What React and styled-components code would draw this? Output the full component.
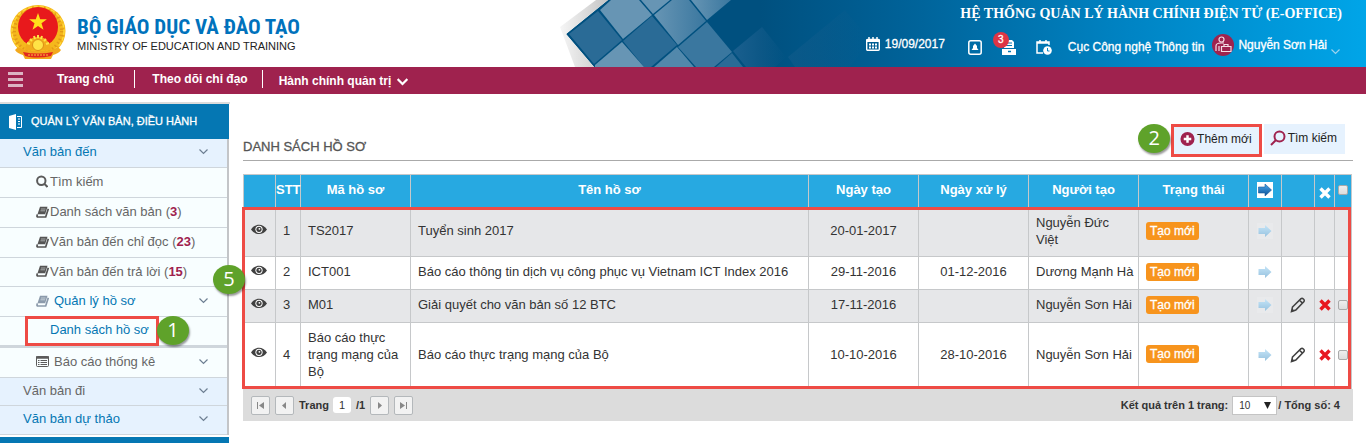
import React from 'react';
import styled, { createGlobalStyle } from 'styled-components';

const Global = createGlobalStyle`
  *, *::before, *::after { box-sizing: border-box; }
  body { margin: 0; background: #fff; color: #333; font: 13px/17px "Liberation Sans", Arial, sans-serif; overflow-x: hidden; }
  button, input, select { font-family: inherit; margin: 0; }
  a { color: inherit; text-decoration: none; }
  svg { display: block; flex: none; }
`;

/* ---------- header ---------- */
const Header = styled.header`
  position: relative;
  display: flex;
  justify-content: space-between;
  height: 67px;
  background: linear-gradient(90deg, #00507f 760px, #006197 900px, #0084c4 1130px, #00a5e8 100%);
`;
const HeaderArt = styled.svg`
  position: absolute;
  left: 0;
  top: 0;
`;
const Brand = styled.div`
  position: relative;
  display: flex;
  gap: 8px;
  padding: 4px 0 0 8px;
`;
const BrandText = styled.div`
  padding-top: 12px;
`;
const BrandName = styled.div`
  color: #0072bc;
  font: bold 21px/22px "Roboto Condensed", "Roboto", sans-serif;
  white-space: nowrap;
`;
const BrandSub = styled.div`
  color: #222;
  font-size: 11px;
  line-height: 17px;
  white-space: nowrap;
`;
const HeaderRight = styled.div`
  position: relative;
  color: #fff;
  padding-right: 24px;
`;
const SystemName = styled.h1`
  margin: 0;
  padding-top: 4px;
  text-align: right;
  font: bold 14px/20px "Liberation Serif", serif;
`;
const Tools = styled.div`
  display: flex;
  align-items: center;
  height: 46px;
  font-size: 12px;
  white-space: nowrap;
  -webkit-text-stroke: 0.3px #fff;
  margin-right: 2px;
`;
const DateBox = styled.div`
  display: flex;
  align-items: center;
  gap: 5px;
  margin-right: 23px;
  padding-bottom: 6px;
`;
const IconButton = styled.button`
  position: relative;
  padding: 0;
  border: 0;
  background: none;
  color: #fff;
  margin-right: ${(p) => p.$gap}px;
`;
const Badge = styled.span`
  position: absolute;
  left: -9px;
  top: -8px;
  width: 16px;
  height: 16px;
  border-radius: 50%;
  background: #dc3545;
  font-size: 10px;
  line-height: 16px;
  text-align: center;
`;
const User = styled.button`
  display: flex;
  align-items: center;
  gap: 4px;
  margin-left: 8px;
  padding: 0 0 4px;
  border: 0;
  background: none;
  color: #fff;
  font-size: 12px;
  > svg:last-child { align-self: flex-end; }
`;

/* ---------- navigation ---------- */
const Nav = styled.nav`
  display: flex;
  align-items: center;
  height: 27px;
  padding: 0 8px 3px;
  background: #9f224e;
  color: #fff;
`;
const MenuButton = styled.button`
  display: flex;
  flex-direction: column;
  gap: 3px;
  width: 15px;
  margin-right: 15px;
  padding: 0;
  border: 0;
  background: none;
`;
const MenuBar = styled.span`
  height: 3px;
  background: #dcb4c3;
`;
const NavLink = styled.a`
  display: flex;
  align-items: center;
  gap: 6px;
  height: 18px;
  padding: ${(p) => (p.$low ? '4px 16px 0 16px' : p.$line ? '0 14px 0 17px' : '0 20px 0 19px')};
  border-left: ${(p) => (p.$line ? '1px solid #fff' : '0')};
  font-size: 12px;
  font-weight: bold;
`;

/* ---------- sidebar ---------- */
const Body = styled.div`
  display: flex;
  align-items: flex-start;
  padding-top: 8px;
`;
const Side = styled.aside`
  flex: none;
  width: 230px;
  border-top: 2px solid #dcdcdc;
`;
const SideTitle = styled.h2`
  display: flex;
  align-items: center;
  gap: 9px;
  height: 35px;
  margin: 0 1px 0 0;
  padding-left: 9px;
  background: #0577b3;
  color: #fff;
  font-size: 11px;
  font-weight: normal;
  -webkit-text-stroke: 0.3px #fff;
`;
const SideList = styled.div`
  position: relative;
  border-right: 2px solid #c3c5c8;
  margin-right: 1px;
`;
const SideLink = styled.a`
  display: flex;
  align-items: center;
  height: ${(p) => p.$h || 30}px;
  padding: 0 19px ${(p) => (p.$leaf ? 2 : 4)}px ${(p) => p.$indent}px;
  gap: ${(p) => p.$gap || 2}px;
  border-bottom: ${(p) => (p.$thick ? 3 : 1)}px solid #cfd6dc;
  background: ${(p) => (p.$top ? '#e6f2fe' : '#f8feff')};
  color: ${(p) => (p.$active ? '#0577b3' : '#666')};
  white-space: nowrap;
  > svg:last-child { margin-left: ${(p) => (p.$open ? 'auto' : '0')}; }
`;
const Count = styled.b`
  color: #9f224e;
`;
const NextTitle = styled.div`
  height: 7px;
  margin: 2px 1px 0 0;
  background: #0577b3;
`;

/* ---------- main ---------- */
const Main = styled.main`
  flex: 1;
  min-width: 0;
  padding: 22px 13px 0;
`;
const TitleBar = styled.div`
  display: flex;
  justify-content: space-between;
  height: 37px;
  border-bottom: 1px solid #aaa;
  margin-bottom: 13px;
`;
const Title = styled.h2`
  margin: 14px 0 0;
  font-size: 13px;
  font-weight: normal;
  line-height: 18px;
  color: #555;
  -webkit-text-stroke: 0.3px #555;
`;
const Actions = styled.div`
  display: flex;
  align-items: flex-start;
  gap: 2px;
  padding-right: 8px;
`;
const Action = styled.button`
  display: flex;
  align-items: center;
  gap: 2px;
  height: ${(p) => (p.$marked ? 33 : 30)}px;
  padding: ${(p) => (p.$marked ? '0 7px 4px 6px' : '0 8px 2px 6px')};
  border: ${(p) => (p.$marked ? '3px solid #ee4b45' : '0')};
  background: #e6f2fe;
  color: #222;
  font-size: 12px;
  white-space: nowrap;
`;
const Marked = styled.div`
  position: relative;
`;
const RedFrame = styled.div`
  position: absolute;
  pointer-events: none;
  border: 3px solid #ee4b45;
  top: ${(p) => p.$t}px;
  left: ${(p) => p.$l}px;
  right: ${(p) => p.$r}px;
  bottom: ${(p) => p.$b}px;
`;
const Step = styled.span`
  position: absolute;
  z-index: 2;
  left: ${(p) => p.$l}px;
  top: ${(p) => p.$t}px;
  width: 32px;
  height: 29px;
  border-radius: 50%;
  background: #5fa22a;
  box-shadow: 1px 2px 2px rgba(0, 0, 0, 0.4);
  color: #fff;
  font: 20px/28px "Open Sans", sans-serif;
  text-align: center;
`;
const Table = styled.table`
  width: calc(100% - 1px);
  border-collapse: collapse;
  table-layout: fixed;
`;
const Th = styled.th`
  height: 33px;
  padding: ${(p) => (p.$icon ? '4px 0 0' : '0 0 3px')};
  border: 1px solid #c6c8ca;
  background: #27a9e1;
  color: #fff;
  font-weight: bold;
  > svg { margin: 0 auto; }
`;
const Tr = styled.tr`
  height: ${(p) => p.$h}px;
  background: ${(p) => (p.$odd ? '#e6e7e9' : '#fff')};
`;
const Td = styled.td`
  padding: ${(p) => (p.$icon ? '0 0 2px' : '0 0 3px 7px')};
  border: 1px solid #c6c8ca;
  text-align: left;
  white-space: pre-line;
`;
const DateTd = styled(Td)`
  padding: 0 0 3px;
  text-align: center;
`;
const RowButton = styled.button`
  display: block;
  margin: 0 auto;
  padding: ${(p) => (p.$up ? '0 2px 4px 0' : '0')};
  border: 0;
  background: none;
`;
const Check = styled.input`
  appearance: none;
  display: block;
  width: 10px;
  height: 10px;
  margin: 0 0 0 3px;
  border: 1px solid #aaa;
  border-radius: 2px;
  background: linear-gradient(#eee, #ddd);
`;
const Tag = styled.span`
  display: inline-block;
  padding: 0 4px;
  border-radius: 3px;
  background: #f7941d;
  color: #fff;
  font-size: 12px;
  line-height: 18px;
  -webkit-text-stroke: 0.3px #fff;
`;
const Pager = styled.footer`
  display: flex;
  align-items: center;
  height: 32px;
  padding: 0 13px 0 8px;
  background: #dcdcdc;
  font-size: 11px;
  font-weight: bold;
  white-space: nowrap;
`;
const PageButton = styled.button`
  display: grid;
  place-items: center;
  width: 19px;
  height: 19px;
  margin-right: 5px;
  padding: 0;
  border: 1px solid #b4b8bb;
  border-radius: 2px;
  background: #f2f2f2;
`;
const PageInput = styled.input`
  width: 18px;
  height: 16px;
  margin: 0 5px 0 4px;
  padding: 0;
  border: 0;
  border-radius: 3px;
  background: #fff;
  color: #333;
  font-size: 11px;
  text-align: center;
`;
const PageTotal = styled.span`
  margin-right: 5px;
`;
const Total = styled.label`
  display: flex;
  align-items: center;
  margin-left: auto;
`;
const SizeWrap = styled.span`
  position: relative;
  display: flex;
  align-items: center;
  margin: 0 1px 0 4px;
`;
const SizeSelect = styled.select`
  appearance: none;
  width: 45px;
  height: 19px;
  padding: 0 6px;
  border: 1px solid #c4c4c4;
  border-radius: 0;
  background: #fff;
  color: #333;
  font-size: 10px;
`;
const SelectArrow = styled.svg`
  position: absolute;
  right: 6px;
  pointer-events: none;
`;

/* ---------- drawings ---------- */
const Emblem = () => (
  <svg width="61" height="57" viewBox="0 0 61 57" aria-hidden="true">
    <ellipse cx="30" cy="27" rx="27.500" ry="26" fill="#f5b81c" />
    <ellipse cx="30" cy="27" rx="24" ry="23" fill="none" stroke="#e39a17" strokeWidth="4" strokeDasharray="1.500 2.500" />
    <ellipse cx="30" cy="27" rx="26" ry="24.500" fill="none" stroke="#ffd83a" strokeWidth="1.500" strokeDasharray="4 2" />
    <ellipse cx="30" cy="23" rx="20" ry="20" fill="#e8191c" />
    <path d="M30 9l2.200 6.300h6.700l-5.400 4 2 6.500-5.500-3.900-5.500 3.900 2-6.500-5.400-4h6.700z" fill="#ffe01b" />
    <path d="M17 46c1-9 6-13 13-13s12 4 13 13z" fill="#f2ac1c" />
    <path d="M22 35l2 2M38 35l-2 2M30 31v3M26 32l1 3M34 32l-1 3M19 39l3 1M41 39l-3 1" stroke="#ffe346" strokeWidth="2" />
    <circle cx="30" cy="41" r="5.500" fill="#ffe346" stroke="#dc8f17" />
    <path d="M10 43c6 4 12 4 20 4s14 0 20-4l3 3c-2 3-5 4-8 5l-2 4H17l-2-4c-3-1-6-2-8-5z" fill="#f2a91d" />
    <path d="M15 48c10 2 20 2 30 0l-2 4c-9 2-18 2-26 0z" fill="#e2261f" />
    <path d="M20 51h20" stroke="#f8c63a" strokeDasharray="2 1" />
  </svg>
);
const Calendar = () => (
  <svg width="14" height="14" viewBox="0 0 14 14" aria-hidden="true">
    <path d="M0 2.500h14V5H0z" fill="#fff" />
    <path d="M3 0v3M7 0v3M11 0v3" stroke="#fff" strokeWidth="1.500" />
    <rect x=".7" y="2.500" width="12.600" height="10.800" rx="1" fill="none" stroke="#fff" strokeWidth="1.400" />
    <path d="M3 7.500h2M6 7.500h2M9 7.500h2M3 10.500h2M6 10.500h2M9 10.500h2" stroke="#fff" strokeWidth="2" />
  </svg>
);
const Chevron = ({ color = '#6d7f92', w = 9, s = 1.2 }) => (
  <svg width={w} height={w} viewBox="0 0 9 9" fill="none" stroke={color} strokeWidth={s} aria-hidden="true"><path d="M.5 2.500l4 4 4-4" /></svg>
);
const Book = ({ color = '#555' }) => (
  <svg width="13" height="12" viewBox="0 0 13 12" aria-hidden="true">
    <path d="M4 .8H11.500L9.200 8.300H1.500z" fill={color} />
    <path d="M1.500 8.300C.5 10.300 1 11 2.200 11H9.700L12.300 2.800" fill="none" stroke={color} strokeWidth="1.700" />
    <path d="M5 3H9.500M4.500 4.800H9" stroke="#f8feff" strokeWidth=".5" />
  </svg>
);
const Lens = () => (
  <svg width="12" height="13" viewBox="0 0 12 13" fill="none" stroke="#5b5b5b" strokeWidth="2" aria-hidden="true"><circle cx="5.300" cy="5.800" r="4.200" /><path d="M8.300 8.800l3.200 3.200" /></svg>
);
const ListIcon = () => (
  <svg width="13" height="11" viewBox="0 0 13 11" aria-hidden="true">
    <rect x=".5" y=".5" width="12" height="10" rx="1" fill="none" stroke="#5b5b5b" /><path d="M0 1.500h13" stroke="#5b5b5b" strokeWidth="2.500" />
    <path d="M2 4.500h1.500M4.500 4.500H11M2 6.500h1.500M4.500 6.500H11M2 8.500h1.500M4.500 8.500H11" stroke="#5b5b5b" />
  </svg>
);
const Eye = () => (
  <svg width="16" height="11" viewBox="0 0 16 11" aria-hidden="true">
    <path d="M0 5.500C4-.8 12-.8 16 5.500 12 11.500 4 11.500 0 5.500z" fill="#404040" />
    <circle cx="8" cy="5.300" r="3.600" fill="#fff" /><circle cx="8" cy="5.300" r="2.600" fill="#404040" /><circle cx="8.400" cy="4.800" r=".9" fill="#fff" />
  </svg>
);
const Arrow = ({ strong }) => (
  <svg width="16" height="16" viewBox="0 0 16 16" aria-hidden="true">
    <defs><linearGradient id={strong ? 'arrowStrong' : 'arrowSoft'} x1="0" y1="0" x2="0" y2="1"><stop offset="0" stopColor={strong ? '#4aaaf0' : '#c5e5f8'} /><stop offset="1" stopColor={strong ? '#0b4f94' : '#97c2df'} /></linearGradient></defs>
    <rect width="16" height="16" fill="#fff" opacity={strong ? 1 : 0.15} />
    <path d="M1.500 5H8V2L14.500 8 8 14V11H1.500z" fill={`url(#${strong ? 'arrowStrong' : 'arrowSoft'})`} stroke={strong ? '#1b5a9c' : 'none'} strokeWidth=".6" />
  </svg>
);
const Cross = ({ color }) => (
  <svg width="12" height="12" viewBox="0 0 12 12" stroke={color} strokeWidth="3.400" aria-hidden="true"><path d="M1.500 1.500l9 9M10.500 1.500l-9 9" /></svg>
);
const Pencil = () => (
  <svg width="16" height="16" viewBox="0 0 16 16" fill="none" stroke="#404040" strokeWidth="1.500" aria-hidden="true">
    <path d="M2.500 10L11 1.700c1.500-1 4 1 3 2.800L5.800 13 1.500 14.500zM9.500 3.200l3 2.900" /><path d="M1 15l1.300-3.500 2.300 2.300z" fill="#404040" stroke="none" />
  </svg>
);
const PageGlyph = ({ d }) => (
  <svg width="9" height="9" viewBox="0 0 9 9" fill="#888" aria-hidden="true"><path d={d} /></svg>
);

const ROWS = [
  { h: 49, code: 'TS2017', name: 'Tuyển sinh 2017', created: '20-01-2017', done: '', by: 'Nguyễn Đức\nViệt' },
  { h: 33, code: 'ICT001', name: 'Báo cáo thông tin dịch vụ công phục vụ Vietnam ICT Index 2016', created: '29-11-2016', done: '01-12-2016', by: 'Dương Mạnh Hà' },
  { h: 33, code: 'M01', name: 'Giải quyết cho văn bản số 12 BTC', created: '17-11-2016', done: '', by: 'Nguyễn Sơn Hải', edit: true },
  { h: 66, code: 'Báo cáo thực trạng mạng của Bộ', name: 'Báo cáo thực trạng mạng của Bộ', created: '10-10-2016', done: '28-10-2016', by: 'Nguyễn Sơn Hải', edit: true },
];
const COLS = [32, 25, 110, null, 110, 110, 110, 110, 33, 33, 20, 17];

export default function App() {
  return (
    <>
      <Global />
      <Header>
        <HeaderArt width="900" height="67" viewBox="0 0 900 67" aria-hidden="true">
          <defs>
            <linearGradient id="edge" x1="0" x2="1"><stop offset="0" stopColor="#f6f6f6" /><stop offset="1" stopColor="#c4c4c4" /></linearGradient>
            <linearGradient id="tile" x1="0" x2="1"><stop offset="0" stopColor="#6795b4" /><stop offset="1" stopColor="#3a779f" /></linearGradient>
            <linearGradient id="haze" x1="0" x2="1"><stop offset="0" stopColor="#1a5f8e" /><stop offset="1" stopColor="#1a5f8e" stopOpacity="0" /></linearGradient>
          </defs>
          <path d="M0 0H608L566 34 594 67H0z" fill="#fff" />
          <path d="M596 0H608L566 34 594 67H575L560 27z" fill="url(#edge)" />
          <path d="M598 11L569 34 594 64 622 40z" fill="#2a6b96" />
          <path d="M600 10L611 0H639L652 15 623 39z" fill="#6795b4" />
          <path d="M641 0H670L653 14z" fill="#6795b4" />
          <path d="M623 41L652 16 677 45 651 67H644z" fill="#2a6b96" />
          <path d="M595 65L622 42 644 67H595z" fill="#6795b4" />
          <path d="M654 15L672 0H689L706 21 678 45z" fill="url(#tile)" />
          <path d="M691 0H731L707 20z" fill="url(#tile)" />
          <path d="M678 47L707 22 732 52 714 67H696z" fill="#3a779f" />
          <path d="M654 67L677 47 694 67z" fill="#5288ab" />
          <path d="M716 67L732 53 743 67z" fill="#2a6b96" />
          <path d="M733 51L762 27 786 57 775 67H746z" fill="url(#haze)" />
          <path d="M788 57L845 10 870 40 850 67H795z" fill="url(#haze)" opacity=".4" />
        </HeaderArt>
        <Brand>
          <Emblem />
          <BrandText>
            <BrandName>BỘ GIÁO DỤC VÀ ĐÀO TẠO</BrandName>
            <BrandSub>MINISTRY OF EDUCATION AND TRAINING</BrandSub>
          </BrandText>
        </Brand>
        <HeaderRight>
          <SystemName>HỆ THỐNG QUẢN LÝ HÀNH CHÍNH ĐIỆN TỬ (E-OFFICE)</SystemName>
          <Tools>
            <DateBox><Calendar />19/09/2017</DateBox>
            <IconButton $gap={20} aria-label="Thông báo">
              <svg width="14" height="15" viewBox="0 0 14 15" fill="none" stroke="#fff" strokeWidth="1.500"><rect x=".8" y=".8" width="12.400" height="13.400" rx="2" /><path d="M3.500 10h7L9 8V6L7 3.500 5 6v2zM6 11.500h2" fill="#fff" stroke="none" /></svg>
            </IconButton>
            <IconButton $gap={20} aria-label="Văn bản">
              <svg width="14" height="15" viewBox="0 0 14 15" fill="#fff"><path d="M4 0h6l2 2v6H2V4h2z" /><path d="M5 3h5M4 5.500h6" stroke="#0077b3" /><path d="M0 9h14v6H0z" /><path d="M6 11.500h3" stroke="#0077b3" strokeWidth="1.500" /></svg>
              <Badge>3</Badge>
            </IconButton>
            <IconButton $gap={16} aria-label="Lịch">
              <svg width="16" height="15" viewBox="0 0 16 15" fill="none" stroke="#fff" strokeWidth="1.500"><path d="M13 5V2H1v11h6M1 3h12M4 0v3M10 0v3" /><circle cx="11.500" cy="10.500" r="4.300" fill="#fff" stroke="none" /><path d="M11.500 8v3h2" stroke="#0086c6" strokeWidth="1" /></svg>
            </IconButton>
            <span>Cục Công nghệ Thông tin</span>
            <User>
              <svg width="22" height="22" viewBox="0 0 22 22" fill="none" stroke="#f2dbe4" strokeWidth="1.200"><circle cx="11" cy="11" r="11" fill="#9f224e" stroke="none" /><circle cx="9.500" cy="5.500" r="2.500" /><path d="M4 17v-5c0-2 2-3 5-3h3M7 17v-5M9.500 12.500h9.500v5H9.500zM12 12.500v-2h4v2" /></svg>
              Nguyễn Sơn Hải
              <Chevron color="#9cd3ee" />
            </User>
          </Tools>
        </HeaderRight>
      </Header>
      <Nav>
        <MenuButton aria-label="Menu"><MenuBar /><MenuBar /><MenuBar /></MenuButton>
        <NavLink href="#home">Trang chủ</NavLink>
        <NavLink href="#follow" $line>Theo dõi chỉ đạo</NavLink>
        <NavLink href="#admin" $line $low>Hành chính quản trị <Chevron color="#fff" w={11} s={1.8} /></NavLink>
      </Nav>
      <Body>
        <Side>
          <SideTitle>
            <svg width="13" height="16" viewBox="0 0 13 16" aria-hidden="true"><path d="M0 2l7-2v16l-7-2z" fill="#fff" /><path d="M8 2.500h4.500v11H8M9 5h2M9 7.500h2M9 10h2" fill="none" stroke="#fff" /></svg>
            QUẢN LÝ VĂN BẢN, ĐIỀU HÀNH
          </SideTitle>
          <SideList>
            <SideLink href="#in" $top $active $open $h={29} $indent={23}>Văn bản đến<Chevron /></SideLink>
            <SideLink href="#find" $leaf $indent={36}><Lens />Tìm kiếm</SideLink>
            <SideLink href="#list" $leaf $indent={36} $gap={1}><Book /><span>Danh sách văn bản (<Count>3</Count>)</span></SideLink>
            <SideLink href="#read" $leaf $indent={36} $gap={1}><Book /><span>Văn bản đến chỉ đọc (<Count>23</Count>)</span></SideLink>
            <SideLink href="#reply" $leaf $h={29} $indent={36} $gap={1}><Book /><span>Văn bản đến trả lời (<Count>15</Count>)</span></SideLink>
            <SideLink href="#files" $leaf $active $open $indent={36} $gap={5}><Book color="#8b9aab" />Quản lý hồ sơ<Chevron /></SideLink>
            <Marked>
              <SideLink href="#filelist" $active $thick $h={31} $indent={50}>Danh sách hồ sơ</SideLink>
              <RedFrame $t={-1} $l={25} $r={68} $b={2} />
              <Step $l={157} $t={-1}>1</Step>
            </Marked>
            <SideLink href="#report" $leaf $open $indent={36} $gap={5}><ListIcon />Báo cáo thống kê<Chevron /></SideLink>
            <SideLink href="#out" $leaf $top $open $h={28} $indent={23}>Văn bản đi<Chevron /></SideLink>
            <SideLink href="#draft" $top $active $open $h={29} $indent={23}>Văn bản dự thảo<Chevron /></SideLink>
          </SideList>
          <NextTitle />
        </Side>
        <Main>
          <TitleBar>
            <Title>DANH SÁCH HỒ SƠ</Title>
            <Actions>
              <Marked>
                <Action $marked>
                  <svg width="15" height="16" viewBox="0 0 16 16"><circle cx="8" cy="8" r="7.500" fill="#9f224e" /><path d="M8 4v8M4 8h8" stroke="#fff" strokeWidth="2.600" /></svg>
                  Thêm mới
                </Action>
                <Step $l={-33} $t={0}>2</Step>
              </Marked>
              <Action>
                <svg width="16" height="16" viewBox="0 0 16 16" fill="none" stroke="#9f224e" strokeWidth="2"><circle cx="9.500" cy="6.500" r="5" /><path d="M6 10l-5 5" /></svg>
                Tìm kiếm
              </Action>
            </Actions>
          </TitleBar>
          <Marked>
            <Table>
              <colgroup>{COLS.map((w, i) => <col key={i} width={w || undefined} />)}</colgroup>
              <thead>
                <tr>
                  <Th aria-label="Xem" /><Th>STT</Th><Th>Mã hồ sơ</Th><Th>Tên hồ sơ</Th><Th>Ngày tạo</Th><Th>Ngày xử lý</Th><Th>Người tạo</Th><Th>Trạng thái</Th>
                  <Th><Arrow strong /></Th><Th aria-label="Sửa" /><Th $icon><Cross color="#fff" /></Th><Th><Check type="checkbox" aria-label="Chọn tất cả" /></Th>
                </tr>
              </thead>
              <tbody>
                {ROWS.map((r, i) => (
                  <Tr key={r.created} $h={r.h} $odd={i % 2 === 0}>
                    <Td $icon><RowButton $up aria-label="Xem"><Eye /></RowButton></Td>
                    <Td>{i + 1}</Td>
                    <Td>{r.code}</Td>
                    <Td>{r.name}</Td>
                    <DateTd>{r.created}</DateTd>
                    <DateTd>{r.done}</DateTd>
                    <Td>{r.by}</Td>
                    <Td><Tag>Tạo mới</Tag></Td>
                    <Td $icon><RowButton aria-label="Chuyển"><Arrow /></RowButton></Td>
                    <Td $icon>{r.edit && <RowButton aria-label="Sửa"><Pencil /></RowButton>}</Td>
                    <Td $icon>{r.edit && <RowButton aria-label="Xóa"><Cross color="#e8171f" /></RowButton>}</Td>
                    <Td $icon>{r.edit && <Check type="checkbox" aria-label={`Chọn ${r.code}`} />}</Td>
                  </Tr>
                ))}
              </tbody>
            </Table>
            <RedFrame $t={33} $l={-1} $r={2} $b={0} />
            <Step $l={-30} $t={91}>5</Step>
          </Marked>
          <Pager>
            <PageButton aria-label="Trang đầu"><PageGlyph d="M1 1h1v7H1zM8 1v7L3 4.500z" /></PageButton>
            <PageButton aria-label="Trang trước"><PageGlyph d="M6 1v7L2 4.500z" /></PageButton>
            <label htmlFor="page">Trang</label>
            <PageInput id="page" defaultValue="1" />
            <PageTotal>/1</PageTotal>
            <PageButton aria-label="Trang sau"><PageGlyph d="M3 1v7l4-3.500z" /></PageButton>
            <PageButton aria-label="Trang cuối"><PageGlyph d="M7 1h1v7H7zM1 1v7l5-3.500z" /></PageButton>
            <Total>
              Kết quả trên 1 trang:
              <SizeWrap>
                <SizeSelect defaultValue="10"><option>10</option><option>20</option></SizeSelect>
                <SelectArrow width="7" height="7" viewBox="0 0 7 7"><path d="M0 0h7L3.500 7z" fill="#222" /></SelectArrow>
              </SizeWrap>
              / Tổng số: 4
            </Total>
          </Pager>
        </Main>
      </Body>
    </>
  );
}
